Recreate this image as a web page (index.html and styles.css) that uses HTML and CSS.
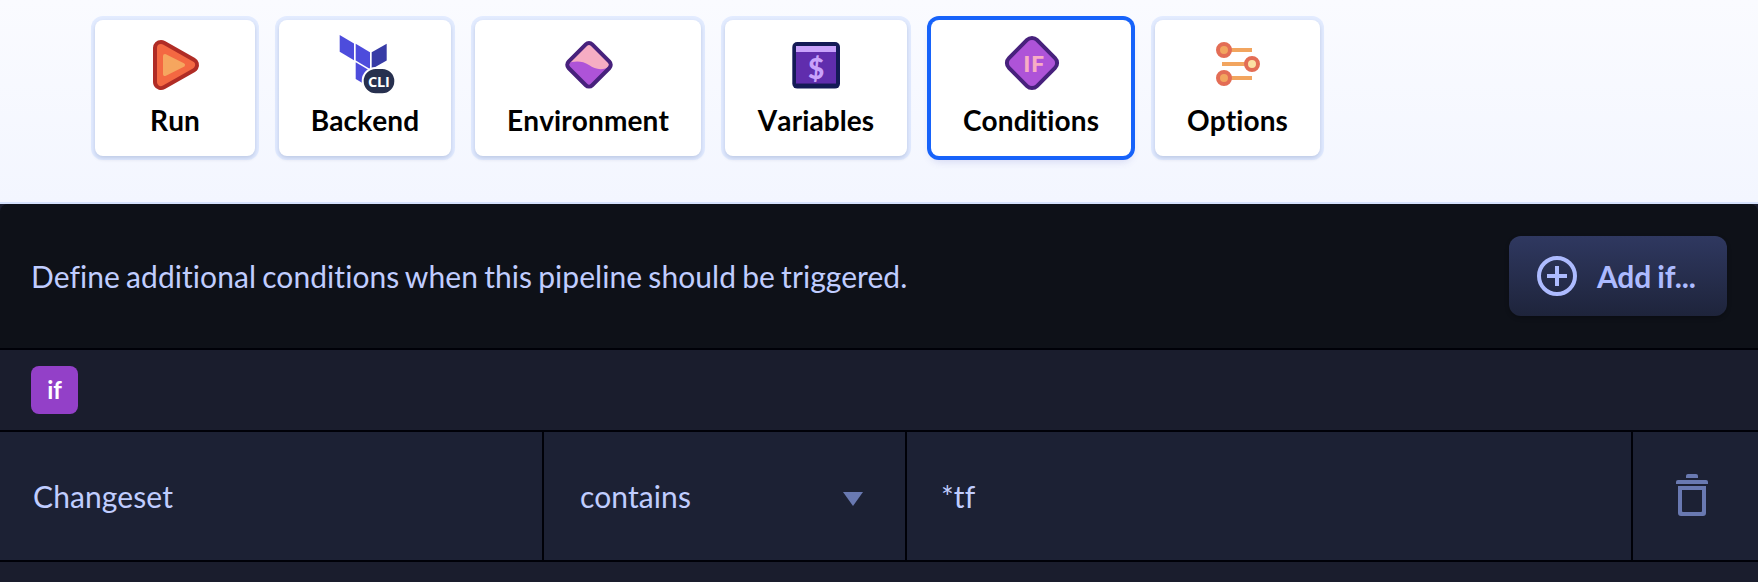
FILE: index.html
```html
<!DOCTYPE html>
<html lang="en">

<head>
    <meta charset="UTF-8">
    <meta name="viewport" content="width=device-width, initial-scale=1.0">
    <title>Pipeline conditions</title>
    <link rel="stylesheet" href="styles.css">
</head>

<body>
    <nav class="tabs">
        <button class="tab tab-run">
            <svg class="tab-icon" viewBox="0 0 64 64">
                <path d="M18 16 L48 33 L18 50 Z" fill="#b02c25" stroke="#b02c25" stroke-width="16" stroke-linejoin="round"/>
                <path d="M18 16 L48 33 L18 50 Z" fill="#f46842" stroke="#f46842" stroke-width="8" stroke-linejoin="round"/>
                <path d="M22 24 L40 33 L22 42 Z" fill="#f6a65f" stroke="#f6a65f" stroke-width="4" stroke-linejoin="round"/>
            </svg>
            <span>Run</span>
        </button>
        <button class="tab tab-backend">
            <svg class="tab-icon" viewBox="0 0 64 64">
                <g fill="#4d4cdc">
                    <path d="M6.7 3 L21 11.5 V28.3 L6.7 19.7 Z"/>
                    <path d="M22.7 11.7 L37 20.2 V37 L22.7 28.4 Z"/>
                    <path d="M22.7 30.2 L37 38.8 V55.6 L22.7 47 Z"/>
                </g>
                <path d="M38.7 20.2 L53.7 11.7 V28.5 L38.7 37 Z" fill="#373ba6"/>
                <rect x="29.7" y="36" width="32.6" height="26.3" rx="13" fill="#27304f" stroke="#fff" stroke-width="2"/>
                <text class="cli" x="45.7" y="54.8">CLI</text>
            </svg>
            <span>Backend</span>
        </button>
        <button class="tab tab-environment">
            <svg class="tab-icon" viewBox="0 0 64 64">
                <clipPath id="diamond">
                    <rect x="16.3" y="16.1" width="33.4" height="33.4" rx="4.5" transform="rotate(45 33 32.8)"/>
                </clipPath>
                <g clip-path="url(#diamond)">
                    <rect width="64" height="64" fill="#f6adc3"/>
                    <path d="M8 33 C15 29 25 27.5 33 33 C40 38 47 39 58 33 V64 H8 Z" fill="#ae53d8"/>
                </g>
                <rect x="16.3" y="16.1" width="33.4" height="33.4" rx="4.5" transform="rotate(45 33 32.8)" fill="none" stroke="#47217c" stroke-width="4"/>
            </svg>
            <span>Environment</span>
        </button>
        <button class="tab tab-variables">
            <svg class="tab-icon" viewBox="0 0 64 64">
                <rect x="8.3" y="10" width="47.7" height="46.6" rx="5" fill="#141a56"/>
                <rect x="12" y="14" width="40" height="38" rx="1" fill="#602dad"/>
                <rect x="12" y="51" width="40" height="1" fill="#3f2285"/>
                <rect x="12" y="14" width="40" height="6" fill="#c9a2fb"/>
                <text class="dollar" x="32.2" y="47">$</text>
            </svg>
            <span>Variables</span>
        </button>
        <button class="tab tab-conditions active">
            <svg class="tab-icon" viewBox="0 0 64 64">
                <rect x="13.2" y="11.2" width="39.6" height="39.6" rx="7" transform="rotate(45 33 31)" fill="#ae53d8" stroke="#47217c" stroke-width="4"/>
                <text class="if-label" x="24.6" y="40">IF</text>
            </svg>
            <span>Conditions</span>
        </button>
        <button class="tab tab-options">
            <svg class="tab-icon" viewBox="0 0 64 64">
                <path d="M18 18 H46 M16 32 H46 M18 46 H46" stroke="#f2a55f" stroke-width="4"/>
                <g stroke="#e36d55" stroke-width="4" fill="#f2a55f">
                    <circle cx="18" cy="18" r="6"/>
                    <circle cx="46" cy="32" r="6" fill="#fbe0a3"/>
                    <circle cx="18" cy="46" r="6"/>
                </g>
            </svg>
            <span>Options</span>
        </button>
    </nav>

    <main class="panel">
        <header class="panel-header">
            <p>Define additional conditions when this pipeline should be triggered.</p>
            <button class="add-button">
                <svg width="40" height="40" viewBox="0 0 40 40" fill="none" stroke="#adbbff" stroke-width="4">
                    <circle cx="20" cy="20" r="18"/>
                    <path d="M20 10 V30 M10 20 H30"/>
                </svg>
                <span>Add if...</span>
            </button>
        </header>
        <div class="group">
            <span class="badge">if</span>
        </div>
        <div class="condition">
            <div class="cell cell-name">Changeset</div>
            <div class="cell cell-operator">
                contains
                <svg class="arrow" width="20" height="14" viewBox="0 0 20 14"><path d="M0 0 H20 L10 14 Z" fill="#6979b1"/></svg>
            </div>
            <div class="cell cell-value">*tf</div>
            <div class="cell cell-delete">
                <svg width="32" height="42" viewBox="0 0 32 42" fill="#6979b1">
                    <path d="M10 4 V2 Q10 0 12 0 H20 Q22 0 22 2 V4 Z"/>
                    <path d="M0 10 V8 Q0 6 2 6 H30 Q32 6 32 8 V10 Z"/>
                    <path d="M2 12 H30 V39 Q30 42 27 42 H5 Q2 42 2 39 Z M6 16 V37 Q6 38 7 38 H25 Q26 38 26 37 V16 Z" fill-rule="evenodd"/>
                </svg>
            </div>
        </div>
    </main>
</body>

</html>
```
FILE: styles.css
```css
* {
    box-sizing: border-box;
}

body {
    margin: 0;
    height: 582px;
    overflow: hidden;
    display: flex;
    flex-direction: column;
    background: #1a1d2d;
    font-family: Lato, sans-serif;
    font-variant-ligatures: none;
}

button {
    border: none;
    font-family: inherit;
    font-variant-ligatures: inherit;
}

.tabs {
    display: flex;
    gap: 24px;
    height: 204px;
    flex-shrink: 0;
    padding: 20px 95px 0;
    background: linear-gradient(to bottom, #fafbff, #f3f6ff);
    border-bottom: 2px solid #d5e1fd;
}

.tab {
    display: flex;
    flex-direction: column;
    align-items: center;
    height: 136px;
    padding: 12px 0 0;
    background: #fff;
    border-radius: 8px;
    box-shadow: 0 0 0 4px rgba(200, 218, 255, 0.45), 0 2px 4px rgba(30, 50, 90, 0.3);
    color: #000;
    font-size: 28px;
    font-weight: 700;
    line-height: 34px;
    letter-spacing: 0.1px;
    font-kerning: none;
}

.tab-run {
    width: 160px;
}

.tab-backend {
    width: 172px;
}

.tab-environment {
    width: 226px;
}

.tab-variables {
    width: 182px;
}

.tab-conditions {
    width: 200px;
}

.tab-options {
    width: 165px;
}

.active {
    box-shadow: 0 0 0 4px #1763fa, 0 5px 8px rgba(60, 70, 180, 0.2);
}

.tab-icon {
    width: 64px;
    height: 64px;
    margin-bottom: 7px;
}

.cli {
    font-family: "Open Sans", sans-serif;
    font-size: 14.5px;
    font-weight: 700;
    letter-spacing: -0.2px;
    text-anchor: middle;
    fill: #fff;
}

.dollar {
    font-size: 28px;
    font-weight: 900;
    text-anchor: middle;
    fill: #c9a2fb;
}

.if-label {
    font-family: Roboto, sans-serif;
    font-size: 22.5px;
    font-weight: 800;
    letter-spacing: 1.3px;
    fill: #f8adc5;
}

.panel {
    color: #c0cdff;
    font-size: 30px;
    line-height: 36px;
}

.panel-header {
    display: flex;
    align-items: center;
    justify-content: space-between;
    height: 146px;
    padding: 0 31px;
    background: #0e1118;
    border-bottom: 2px solid #000108;
    border-radius: 8px 8px 0 0;
}

.panel-header p {
    margin: 0;
    letter-spacing: 0.06px;
    word-spacing: -1.6px;
}

.add-button {
    display: flex;
    align-items: center;
    gap: 20px;
    width: 218px;
    height: 80px;
    padding: 0 28px;
    border-radius: 12px;
    background: linear-gradient(to bottom, #2f3860, #1e243b);
    box-shadow: 0 2px 4px rgba(0, 0, 0, 0.25);
    color: #adbbff;
    font-size: 30px;
    font-weight: 700;
    letter-spacing: -0.15px;
    word-spacing: -1px;
    white-space: nowrap;
}

.group {
    display: flex;
    align-items: center;
    height: 82px;
    padding: 0 31px;
    border-bottom: 2px solid #000108;
}

.badge {
    width: 47px;
    height: 48px;
    border-radius: 8px;
    background: #9340c8;
    color: #fff;
    font-size: 24px;
    font-weight: 700;
    line-height: 48px;
    text-align: center;
}

.condition {
    display: grid;
    grid-template-columns: 544px 363px 1fr 125px;
    height: 130px;
    background: #1c2134;
    border-bottom: 2px solid #000108;
}

.cell {
    display: flex;
    align-items: center;
    justify-content: space-between;
    padding: 0 42px 0 34px;
    border-right: 2px solid #000108;
    letter-spacing: 0.1px;
}

.cell-name {
    padding-left: 33px;
}

.cell-operator {
    padding-left: 36px;
}

.arrow {
    margin-top: 6px;
}

.cell-delete {
    justify-content: center;
    padding: 0 7px 2px 0;
    border-right: none;
}
```
